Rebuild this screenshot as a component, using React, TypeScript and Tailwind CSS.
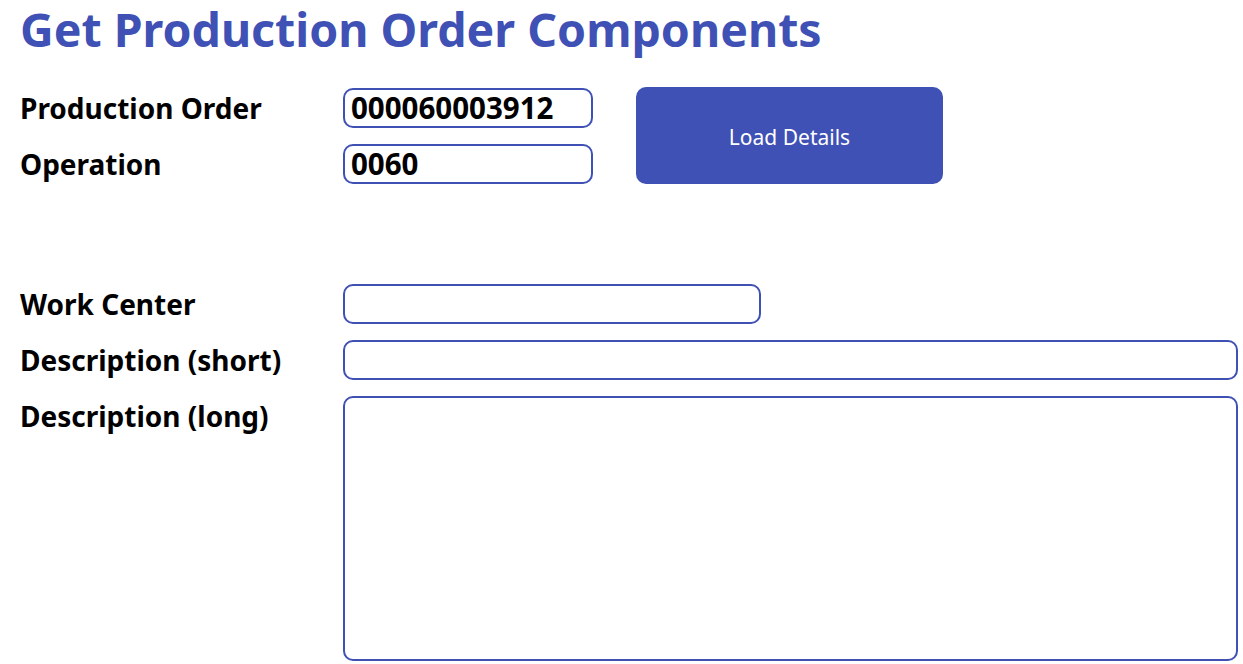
export default function App() {
  const font = { fontFamily: '"Noto Sans", "Open Sans", sans-serif' }
  return (
    <div className="w-[1243px] min-h-[664px] bg-white" style={font}>
      <h1 className="pl-[20px] pt-[1px] text-[46.5px] leading-[56px] font-bold text-[#3f51b5] whitespace-nowrap">
        Get Production Order Components
      </h1>

      {/* Entrada de orden */}
      <div className="flex items-start mt-[30px]">
        <div className="flex flex-col gap-[16px] pt-[1px]">
          <div className="flex items-center h-[40px]">
            <span className="w-[343px] pl-[20px] text-[28px] font-bold text-black">Production Order</span>
            <div className="w-[250px] h-[40px] border-2 border-[#3f51b5] rounded-[10px] flex items-center px-[6px] text-[29.5px] font-bold text-black">
              000060003912
            </div>
          </div>
          <div className="flex items-center h-[40px]">
            <span className="w-[343px] pl-[20px] text-[28px] font-bold text-black">Operation</span>
            <div className="w-[250px] h-[40px] border-2 border-[#3f51b5] rounded-[10px] flex items-center px-[6px] text-[29.5px] font-bold text-black">
              0060
            </div>
          </div>
        </div>
        <button className="ml-[43px] w-[307px] h-[97px] pt-[5px] rounded-[10px] bg-[#3f51b5] text-white text-[21px] flex items-center justify-center">
          Load Details
        </button>
      </div>

      {/* Detalles */}
      <div className="flex flex-col gap-[16px] mt-[100px]">
        <div className="flex items-center h-[40px]">
          <span className="w-[343px] pl-[20px] text-[28px] font-bold text-black">Work Center</span>
          <div className="w-[418px] h-[40px] border-2 border-[#3f51b5] rounded-[10px]" />
        </div>
        <div className="flex items-center h-[40px]">
          <span className="w-[343px] pl-[20px] text-[28px] font-bold text-black">Description (short)</span>
          <div className="w-[895px] h-[40px] border-2 border-[#3f51b5] rounded-[10px]" />
        </div>
        <div className="flex items-start">
          <span className="w-[343px] pl-[20px] h-[40px] flex items-center text-[28px] font-bold text-black">Description (long)</span>
          <div className="w-[895px] h-[265px] border-2 border-[#3f51b5] rounded-[10px]" />
        </div>
      </div>
    </div>
  )
}
